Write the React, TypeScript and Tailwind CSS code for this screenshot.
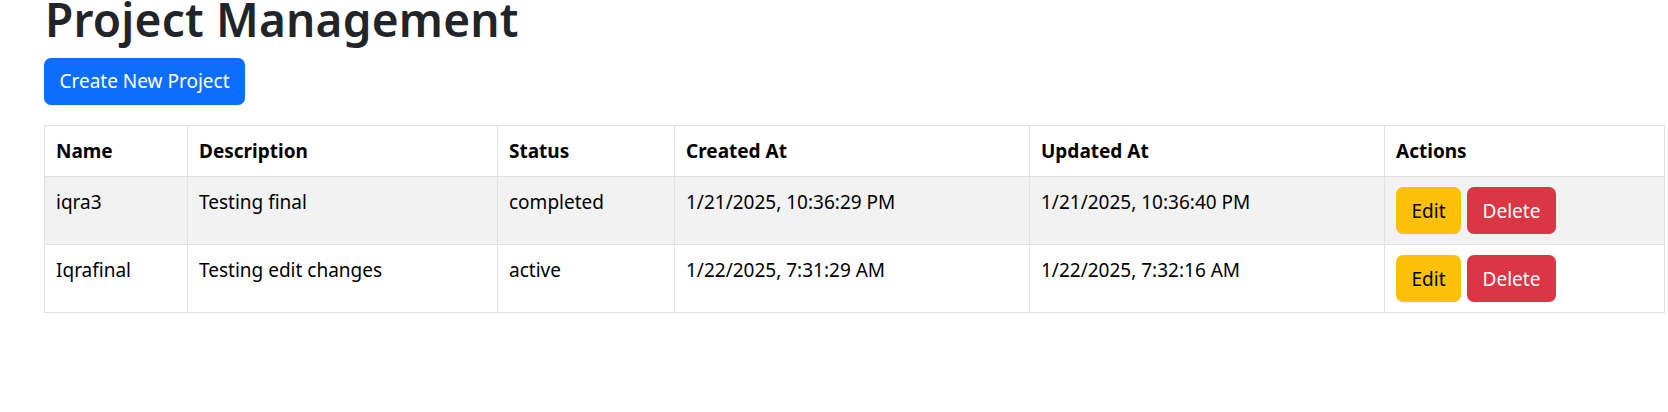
import React from 'react'

type Project = {
  name: string
  description: string
  status: string
  createdAt: string
  updatedAt: string
}

const PROJECTS: Project[] = [
  { name: 'iqra3', description: 'Testing final', status: 'completed', createdAt: '1/21/2025, 10:36:29 PM', updatedAt: '1/21/2025, 10:36:40 PM' },
  { name: 'Iqrafinal', description: 'Testing edit changes', status: 'active', createdAt: '1/22/2025, 7:31:29 AM', updatedAt: '1/22/2025, 7:32:16 AM' },
]

// ── Table header cell ─────────────────────────────────────────────────────────
function Th({ w, children }: { w: string; children: React.ReactNode }) {
  return (
    <th className={`${w} border border-[#dee2e6] px-[11px] py-[10px] text-left font-bold leading-[30px] text-black`}>
      {children}
    </th>
  )
}

function Td({ children }: { children: React.ReactNode }) {
  return (
    <td className="border border-[#dee2e6] px-[11px] py-[10px] align-top leading-[30px] text-black">
      {children}
    </td>
  )
}

export default function App() {
  return (
    <div className="min-h-screen bg-white pl-[44px] font-['Noto_Sans',sans-serif] text-[19px] text-[#212529]">
      <h1 className="pl-[1px] text-[46px] font-semibold leading-[39px] tracking-[0.2px]">Project Management</h1>

      <button className="mt-[19px] flex h-[47px] w-[201px] items-center justify-center rounded-[7px] bg-[#0d6efd] text-white">
        Create New Project
      </button>

      {/* Projects table */}
      <table className="mt-[20px] w-[1620px] table-fixed border-collapse">
        <thead>
          <tr className="bg-white">
            <Th w="w-[143px]">Name</Th>
            <Th w="w-[310px]">Description</Th>
            <Th w="w-[177px]">Status</Th>
            <Th w="w-[355px]">Created At</Th>
            <Th w="w-[355px]">Updated At</Th>
            <Th w="w-[280px]">Actions</Th>
          </tr>
        </thead>
        <tbody>
          {PROJECTS.map((p, i) => (
            <tr key={p.name} className={i % 2 === 0 ? 'bg-[#f2f2f2]' : 'bg-white'}>
              <Td>{p.name}</Td>
              <Td>{p.description}</Td>
              <Td>{p.status}</Td>
              <Td>{p.createdAt}</Td>
              <Td>{p.updatedAt}</Td>
              <Td>
                <div className="flex gap-[6px]">
                  <button className="flex h-[47px] w-[65px] items-center justify-center rounded-[7px] bg-[#ffc107] text-black">
                    Edit
                  </button>
                  <button className="flex h-[47px] w-[89px] items-center justify-center rounded-[7px] bg-[#dc3545] text-white">
                    Delete
                  </button>
                </div>
              </Td>
            </tr>
          ))}
        </tbody>
      </table>
    </div>
  )
}
